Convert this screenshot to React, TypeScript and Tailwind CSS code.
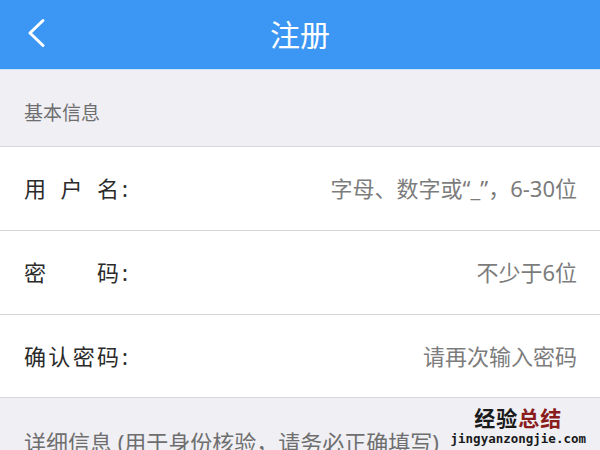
const font = { fontFamily: '"Noto Sans", "Noto Sans CJK SC", sans-serif' };

type RowProps = {
    label: string[];
    placeholder: string;
    last?: boolean;
};

const Row = ({ label, placeholder, last }: RowProps) => (
    <div
        className={
            'h-[84px] bg-white border-t border-[#d6d6d8] flex items-center justify-between pl-6 pr-[23px]' +
            (last ? ' border-b' : '')
        }
    >
        <div className="flex items-center text-[22px] text-[#2b2b2b]">
            <div className="w-[95px] flex justify-between">
                {label.map((c) => (
                    <span key={c}>{c}</span>
                ))}
            </div>
            <span className="ml-[3px]">:</span>
        </div>
        <span className="text-[22px] text-[#7c7c7c]">{placeholder}</span>
    </div>
);

export default function App() {
    return (
        <div className="relative w-[600px] h-[450px] overflow-hidden bg-[#efeff4]" style={font}>
            <header className="relative h-[70px] bg-[#3b96f4] flex items-center justify-center border-b border-[#cfe3f8]">
                <svg className="absolute left-[26px] top-[18px]" width="22" height="30" viewBox="0 0 22 30">
                    <polyline
                        points="17,2.5 4,15 17,27.5"
                        fill="none"
                        stroke="white"
                        strokeWidth="3"
                        strokeLinecap="round"
                        strokeLinejoin="round"
                    />
                </svg>
                <h1 className="text-[30px] text-white">注册</h1>
            </header>

            <div className="h-[76px] flex items-center pl-6 pt-[10px] text-[19px] text-[#6e6e6e]">基本信息</div>

            <Row label={['用', '户', '名']} placeholder="字母、数字或“_”，6-30位" />
            <Row label={['密', '码']} placeholder="不少于6位" />
            <Row label={['确', '认', '密', '码']} placeholder="请再次输入密码" last />

            <div className="pl-6 pt-[28px] text-[22px] text-[#6e6e6e] whitespace-nowrap">
                详细信息 (用于身份核验，请务必正确填写)
            </div>

            <div className="absolute right-[14px] bottom-[5px] flex flex-col items-center">
                <div className="text-[21px] font-bold leading-none tracking-[1px]">
                    <span className="text-[#1a1a1a]">经验</span>
                    <span className="text-[#8a1c1c]">总结</span>
                </div>
                <div
                    className="mt-[4px] text-[12.5px] font-bold leading-none text-[#1a1a1a]"
                    style={{ fontFamily: '"DejaVu Sans Mono", monospace' }}
                >
                    jingyanzongjie.com
                </div>
            </div>
        </div>
    );
}
